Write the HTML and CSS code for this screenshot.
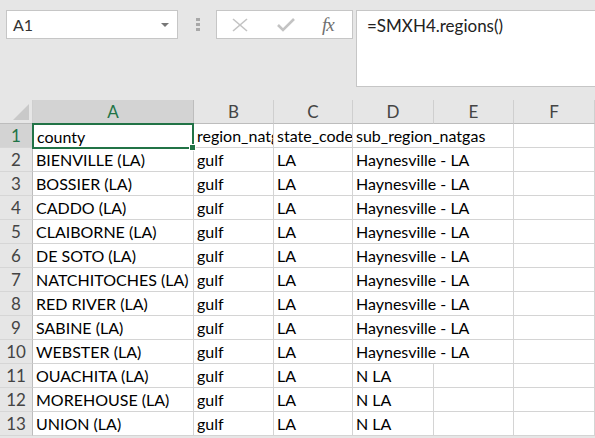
FILE: index.html
```html
<!DOCTYPE html>
<html lang="en">
<head>
  <meta charset="UTF-8">
  <title>Book1 - Excel</title>
  <link rel="stylesheet" href="styles.css">
</head>
<body>
  <div class="toolbar">
    <div class="name-box">
      <span>A1</span>
      <span class="caret"></span>
    </div>
    <div class="grip"><i></i><i></i><i></i></div>
    <div class="fx-buttons">
      <svg width="16" height="14" viewBox="0 0 16 14" fill="none" stroke="#c3c3c3" stroke-width="1.6">
        <path d="M1 1L15 13"></path>
        <path d="M15 1L1 13"></path>
      </svg>
      <svg width="18" height="14" viewBox="0 0 18 14" fill="none" stroke="#c3c3c3" stroke-width="2.6">
        <path d="M1 7l5 5L17 1"></path>
      </svg>
      <span class="fx">fx</span>
    </div>
    <div class="formula">=SMXH4.regions()</div>
  </div>

  <div class="sheet">
    <div class="corner"><span class="tri"></span></div>
    <div class="col sel">A</div>
    <div class="col">B</div>
    <div class="col">C</div>
    <div class="col">D</div>
    <div class="col">E</div>
    <div class="col">F</div>
  </div>

  <div class="sheet" id="rows"></div>

  <script>
    const data = [
      ["county", "region_natgas", "state_code", "sub_region_natgas"],
      ["BIENVILLE (LA)", "gulf", "LA", "Haynesville - LA"],
      ["BOSSIER (LA)", "gulf", "LA", "Haynesville - LA"],
      ["CADDO (LA)", "gulf", "LA", "Haynesville - LA"],
      ["CLAIBORNE (LA)", "gulf", "LA", "Haynesville - LA"],
      ["DE SOTO (LA)", "gulf", "LA", "Haynesville - LA"],
      ["NATCHITOCHES (LA)", "gulf", "LA", "Haynesville - LA"],
      ["RED RIVER (LA)", "gulf", "LA", "Haynesville - LA"],
      ["SABINE (LA)", "gulf", "LA", "Haynesville - LA"],
      ["WEBSTER (LA)", "gulf", "LA", "Haynesville - LA"],
      ["OUACHITA (LA)", "gulf", "LA", "N LA"],
      ["MOREHOUSE (LA)", "gulf", "LA", "N LA"],
      ["UNION (LA)", "gulf", "LA", "N LA"]
    ];

    const rows = document.getElementById("rows");
    let html = "";
    data.forEach((r, i) => {
      html += `<div class="rowhead${i === 0 ? " sel" : ""}">${i + 1}</div>`;
      html += `<div class="cell${i === 0 ? " active" : ""}">${r[0]}</div>`;
      html += `<div class="cell">${r[1]}</div>`;
      html += `<div class="cell">${r[2]}</div>`;
      // long text spills over the empty E cell, like excel does
      if (r[3].length > 5) {
        html += `<div class="cell wide">${r[3]}</div>`;
      } else {
        html += `<div class="cell">${r[3]}</div><div class="cell"></div>`;
      }
      html += `<div class="cell"></div>`;
    });
    rows.innerHTML = html;
  </script>
</body>
</html>
```

FILE: styles.css
```css
body {
  margin: 0;
  width: 595px;
  height: 438px;
  overflow: hidden;
  background: #e6e6e6;
  font-family: Lato, "Open Sans", sans-serif;
  font-size: 16px;
  color: #000;
}
.toolbar {
  display: flex;
  align-items: flex-start;
  height: 100px;
  box-sizing: border-box;
  padding: 10px 0 0 6px;
}
.name-box {
  width: 172px;
  height: 29px;
  box-sizing: border-box;
  background: #fff;
  border: 1px solid #c6c6c6;
  display: flex;
  align-items: center;
  justify-content: space-between;
  padding: 0 8px 0 6px;
  color: #333;
}
.caret {
  width: 0;
  height: 0;
  border-left: 4px solid transparent;
  border-right: 4px solid transparent;
  border-top: 4px solid #777;
}
.grip {
  width: 4px;
  margin: 8px 16px 0 18px;
  display: flex;
  flex-direction: column;
  gap: 2px;
}
.grip i {
  display: block;
  width: 4px;
  height: 3px;
  background: #a8a8a8;
}
.fx-buttons {
  width: 137px;
  height: 29px;
  box-sizing: border-box;
  background: #fff;
  border: 1px solid #c6c6c6;
  display: flex;
  align-items: center;
  padding-left: 15px;
}
.fx-buttons svg:nth-child(2) {
  margin-left: 29px;
}
.fx {
  margin-left: 27px;
  font-family: "Liberation Serif", serif;
  font-style: italic;
  font-size: 19px;
  color: #707070;
  letter-spacing: -1px;
}
.formula {
  flex: 1;
  height: 77px;
  box-sizing: border-box;
  margin-left: 3px;
  background: #fff;
  border: 1px solid #c6c6c6;
  border-right: none;
  padding: 4px 0 0 10px;
  color: #222;
  font-size: 17px;
}
.sheet {
  display: grid;
  grid-template-columns: 33px 161px 80px 79px 81px 80px 81px;
  grid-auto-rows: 24px;
  background: #fff;
}
.sheet:first-of-type {
  grid-auto-rows: 23px;
}
.corner {
  background: #e6e6e6;
  border-right: 1px solid #cfcfcf;
  border-bottom: 1px solid #bdbdbd;
  position: relative;
}
.tri {
  position: absolute;
  right: 3px;
  bottom: 3px;
  width: 0;
  height: 0;
  border-left: 16px solid transparent;
  border-bottom: 16px solid #c9c9c9;
}
.col {
  background: #e6e6e6;
  border-right: 1px solid #cfcfcf;
  border-bottom: 1px solid #bdbdbd;
  box-sizing: border-box;
  display: flex;
  align-items: center;
  justify-content: center;
  color: #444;
  font-size: 17px;
}
.col.sel {
  background: #d3d3d3;
  color: #217346;
  border-right-color: #bdbdbd;
}
.rowhead {
  background: #e6e6e6;
  border-right: 1px solid #bdbdbd;
  border-bottom: 1px solid #d6d6d6;
  box-sizing: border-box;
  display: flex;
  align-items: center;
  justify-content: center;
  color: #444;
  font-size: 17px;
}
.rowhead.sel {
  background: #d3d3d3;
  color: #217346;
}
.cell {
  border-right: 1px solid #d4d4d4;
  border-bottom: 1px solid #d4d4d4;
  box-sizing: border-box;
  padding: 0 0 0 3px;
  white-space: nowrap;
  overflow: hidden;
  display: flex;
  align-items: center;
}
.cell.wide {
  grid-column: span 2;
}
.cell.active {
  border: 2px solid #217346;
  margin-left: -1px;
  margin-top: -1px;
  height: 26px;
  overflow: visible;
  position: relative;
}
.cell.active::after {
  content: "";
  position: absolute;
  right: -4px;
  bottom: -4px;
  width: 5px;
  height: 5px;
  background: #217346;
  border: 1px solid #fff;
}
```
